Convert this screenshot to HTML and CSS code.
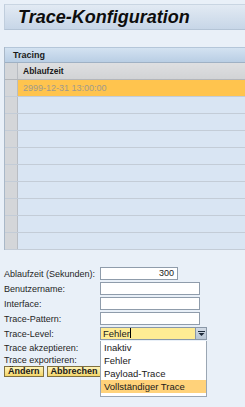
FILE: index.html
```html
<!DOCTYPE html>
<html>
<head>
    <title>Trace-Konfiguration</title>
    <link rel="stylesheet" href="styles.css">
</head>
<body>
    <div class="title-bar">Trace-Konfiguration</div>

    <div class="panel">
        <div class="panel-head">Tracing</div>
        <table class="grid">
            <tr class="col-head"><td class="sel"></td><td>Ablaufzeit</td></tr>
            <tr class="picked"><td class="sel"></td><td>2999-12-31 13:00:00</td></tr>
            <tr><td class="sel"></td><td></td></tr>
            <tr><td class="sel"></td><td></td></tr>
            <tr><td class="sel"></td><td></td></tr>
            <tr><td class="sel"></td><td></td></tr>
            <tr><td class="sel"></td><td></td></tr>
            <tr><td class="sel"></td><td></td></tr>
            <tr><td class="sel"></td><td></td></tr>
            <tr><td class="sel"></td><td></td></tr>
            <tr><td class="sel"></td><td></td></tr>
        </table>
    </div>

    <div class="form">
        <label>Ablaufzeit (Sekunden):</label>
        <div class="field short num">300</div>
        <label>Benutzername:</label>
        <div class="field"></div>
        <label>Interface:</label>
        <div class="field"></div>
        <label>Trace-Pattern:</label>
        <div class="field"></div>
        <label>Trace-Level:</label>
        <div class="combo-wrap">
            <div class="combo">
                <span class="combo-text">Fehler<span class="caret"></span></span>
                <span class="combo-btn">
                    <svg width="7" height="5" viewBox="0 0 7 5"><rect x="0" y="0" width="7" height="1" fill="#1d2a3a"/><path d="M0.5 2 L6.5 2 L3.5 5 Z" fill="#1d2a3a"/></svg>
                </span>
            </div>
            <ul class="listbox">
                <li>Inaktiv</li>
                <li>Fehler</li>
                <li>Payload-Trace</li>
                <li class="hot">Vollständiger Trace</li>
            </ul>
        </div>
        <label>Trace akzeptieren:</label>
        <div></div>
        <label>Trace exportieren:</label>
        <div></div>
    </div>

    <div class="buttons">
        <button>Ändern</button>
        <button>Abbrechen</button>
    </div>
</body>
</html>
```

FILE: styles.css
```css
html {
    background: #e9f0f8;
}

body {
    margin: 0;
    padding: 4px 0 40px 4px;
    min-height: 407px;
    box-sizing: border-box;
    background: #e9f0f8;
    font-family: "Liberation Sans", Arial, sans-serif;
    font-size: 9px;
    color: #1a1a1a;
}

.title-bar {
    height: 26px;
    box-sizing: border-box;
    padding-left: 13px;
    line-height: 25px;
    font-size: 18px;
    font-weight: bold;
    font-style: italic;
    color: #0d0d0d;
    background: linear-gradient(#e2eaf3, #c7d6e7);
    border-top: 1px solid #c9d5e2;
    border-left: 1px solid #c0cedd;
    border-bottom: 1px solid #b4c4d6;
}

.panel {
    margin-top: 17px;
    border-left: 1px solid #a9b8c8;
}

.panel-head {
    height: 16px;
    box-sizing: border-box;
    padding-left: 8px;
    line-height: 15px;
    font-weight: bold;
    font-size: 9px;
    background: linear-gradient(#d3e2f1, #b9cee4);
    border-top: 1px solid #b4c6d9;
    border-bottom: 1px solid #9fb1c4;
}

.grid {
    width: 100%;
    border-collapse: collapse;
}

.grid td {
    height: 16px;
    padding: 0 0 0 5px;
    background: #d9e5f3;
    border-bottom: 1px solid #c3ccd7;
}

.grid td.sel {
    width: 12px;
    padding: 0;
    background: #d4d6d9;
    border-right: 1px solid #b9bdc3;
}

.col-head td {
    font-weight: bold;
    font-size: 8.5px;
    background: linear-gradient(#dedfe1, #d1d3d5);
    border-bottom: 1px solid #b3b6ba;
}

.picked td {
    background: #ffc44e;
    color: #a19a8c;
}

.picked td.sel {
    background: #d4d6d9;
}

.form {
    display: grid;
    grid-template-columns: 96px 1fr;
    grid-template-rows: repeat(5, 15px) 13px 12px;
    margin-top: 16px;
    align-items: center;
}

.form label {
    color: #1f1f1f;
}

.field {
    width: 100px;
    height: 13px;
    box-sizing: border-box;
    background: #fff;
    border: 1px solid #8f9cab;
    padding: 0 3px;
    line-height: 11px;
}

.field.short {
    width: 78px;
}

.field.num {
    text-align: right;
}

.combo-wrap {
    position: relative;
    height: 13px;
}

.combo {
    display: flex;
    width: 107px;
    height: 13px;
    box-sizing: border-box;
    border: 1px solid #8a98a8;
    background: #ffec94;
}

.combo-text {
    flex: 1;
    padding-left: 2px;
    line-height: 11px;
    font-size: 9.5px;
}

.caret {
    display: inline-block;
    width: 1px;
    height: 10px;
    background: #000;
    vertical-align: -1px;
}

.combo-btn {
    width: 10px;
    display: flex;
    align-items: center;
    justify-content: center;
    background: linear-gradient(#d2dbe6, #b8c5d4);
    border-left: 1px solid #8a98a8;
}

.listbox {
    position: absolute;
    top: 14px;
    left: 0;
    width: 107px;
    box-sizing: border-box;
    margin: 0;
    padding: 0 0 3px 0;
    list-style: none;
    background: #fff;
    border: 1px solid #9aa6b3;
    border-top: none;
    font-size: 9.5px;
    z-index: 2;
}

.listbox li {
    height: 13px;
    line-height: 13px;
    padding-left: 3px;
}

.listbox li.hot {
    background: #ffd27a;
}

.buttons {
    display: flex;
    gap: 3px;
    margin-top: 0;
}

button {
    height: 11px;
    padding: 0 3px;
    font-family: "Liberation Sans", Arial, sans-serif;
    font-size: 9px;
    font-weight: bold;
    line-height: 9px;
    color: #1a1a1a;
    background: linear-gradient(#fff4b8, #f3d56a);
    border: 1px solid #7f7040;
    border-radius: 0;
}
```
